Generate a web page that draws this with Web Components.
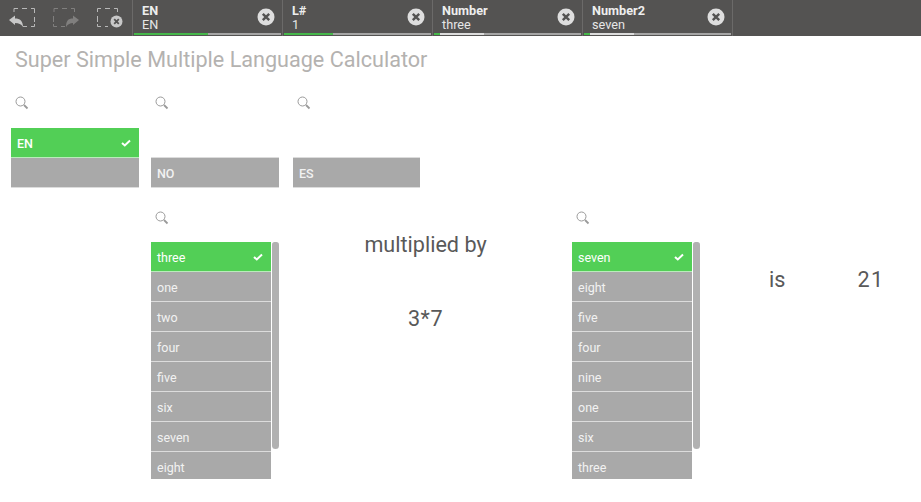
<!DOCTYPE html>
<html>
<head>
<meta charset="utf-8">
<style>
  html, body { margin: 0; height: 100%; background: #fff; overflow: hidden; }
  body { font-family: Roboto, "Liberation Sans", sans-serif; }
</style>
</head>
<body>
<qs-app></qs-app>

<script>
    // small helper, every element gets an open shadow root with its own styles
    class Base extends HTMLElement {
        constructor(html) {
            super();
            this.attachShadow({mode: 'open'}).innerHTML = html;
        }
    }

    const SEARCH = `<svg width="14" height="14" viewBox="0 0 14 14" fill="none" stroke="#9a9a9a">
        <circle cx="5.5" cy="5.5" r="4.500"/><path d="M9 9 L12.500 12.500" stroke-width="1.800"/></svg>`;

    class QsTab extends Base {
        constructor() {
            super(`<style>
                :host { display: flex; width: 150px; height: 36px; box-sizing: border-box; padding: 0 1px 0 1px;
                        border-right: 1px solid #6b6a69; position: relative; }
                .txt { flex: 1; padding: 4px 0 0 8px; color: #e6e6e6; font-size: 12.700px; line-height: 14px; }
                b { display: block; color: #eee; }
                svg { margin: 8px 6px 0 0; }
                .bar { position: absolute; left: 1px; right: 1px; bottom: 1px; height: 2px; background: #a5a5a5; display: flex; }
                .g { background: #46b84b; }
                .w { background: #dcdcdc; }
            </style>
            <div class="txt"><b></b><span></span></div>
            <svg width="18" height="18" viewBox="0 0 18 18">
                <circle cx="9" cy="9" r="8.500" fill="#dedede"/>
                <path d="M5.800 5.800 L12.200 12.200 M12.200 5.800 L5.800 12.200" stroke="#545352" stroke-width="2.400"/>
            </svg>
            <div class="bar"><div class="g"></div><div class="w"></div></div>`);
        }
        connectedCallback() {
            const s = this.shadowRoot;
            s.querySelector('b').textContent = this.getAttribute('field');
            s.querySelector('span').textContent = this.getAttribute('value');
            s.querySelector('.g').style.width = this.getAttribute('green') + 'px';
            s.querySelector('.w').style.width = this.getAttribute('white') + 'px';
        }
    }
    customElements.define('qs-tab', QsTab);

    class QsToolbar extends Base {
        constructor() {
            super(`<style>
                :host { display: flex; height: 36px; background: #545352; }
                .tools { width: 132px; display: flex; border-right: 1px solid #6b6a69; }
                svg { display: block; }
            </style>
            <div class="tools">
              <svg width="132" height="36" viewBox="0 0 132 36" fill="none">
                <path d="M14 12 V8.500 H18 M22 8.500 H27 M31 8.500 H34.500 V13 M34.500 17 V22 M34.500 24 V26.500 H31 M27 26.500 H23" stroke="#b8b8b8"/>
                <path d="M9 20 L15 15.500 V18.500 C20 18.500 23 21 23 27 C21 24 19 23 15 23 V25 Z" fill="#c8c8c8"/>
                <path d="M54 12 V8.500 H58 M62 8.500 H67 M71 8.500 H74.500 V12 M53.500 16 V22 M53.500 24 V26.500 H57 M61 26.500 H65" stroke="#807f7e"/>
                <path d="M79 20 L73 15.500 V18.500 C68 18.500 66 21 66 27 C68 24 70 23 73 23 V25 Z" fill="#807f7e"/>
                <path d="M97.500 12 V8.500 H101 M105 8.500 H110 M114 8.500 H117.500 V12 M97.500 16 V22 M97.500 24 V26.500 H101 M105 26.500 H108" stroke="#b8b8b8"/>
                <circle cx="116.500" cy="21.500" r="6" fill="#c8c8c8"/>
                <path d="M114.200 19.200 L118.800 23.800 M118.800 19.200 L114.200 23.800" stroke="#545352" stroke-width="1.800"/>
              </svg>
            </div>
            <slot></slot>`);
        }
    }
    customElements.define('qs-toolbar', QsToolbar);

    // one list: search icon, rows, optional scrollbar. "" as row = empty slot
    class QsList extends Base {
        constructor() {
            super(`<style>
                :host { display: block; font-size: 12.500px; }
                .search { height: var(--search-h, 31px); padding-left: 4px; }
                .search svg { display: block; margin-top: 1px; }
                .wrap { display: flex; gap: 1px; }
                .rows { flex: 1; min-width: 0; height: var(--rows-h, auto); overflow: hidden; }
                .row { height: 28px; padding: 1px 6px 0; border-bottom: 1px solid #dcdcdc; background: #a9a9a9;
                       color: #f2f2f2; display: flex; justify-content: space-between; align-items: center; }
                .row.sel { background: #52cf56; color: #fff; border-bottom-color: #b9ecbb; }
                .row.empty { background: transparent; }
                .bar { width: 7px; height: 207px; background: #b1b1b1; border-radius: 3px 3px 4px 4px; }
                svg.chk { margin-right: 2px; }
            </style>
            <div class="search">${SEARCH}</div>
            <div class="wrap"><div class="rows"></div></div>`);
        }
        connectedCallback() {
            const rows = this.shadowRoot.querySelector('.rows');
            const sel = this.getAttribute('selected');
            rows.innerHTML = this.getAttribute('rows').split(',').map(r => {
                if (r === '') return `<div class="row empty"></div>`;
                if (r === '_') return `<div class="row"></div>`;
                const chk = r === sel ? `<svg class="chk" width="10" height="8" viewBox="0 0 10 8"><path d="M1 4 L3.800 6.500 L9 1.500" fill="none" stroke="#fff" stroke-width="2"/></svg>` : '';
                return `<div class="row${r === sel ? ' sel' : ''}"><span>${r}</span>${chk}</div>`;
            }).join('');
            if (this.hasAttribute('scroll')) {
                const bar = document.createElement('div');
                bar.className = 'bar';
                rows.parentNode.appendChild(bar);
            }
        }
    }
    customElements.define('qs-list', QsList);

    class QsText extends Base {
        constructor() {
            super(`<style>
                :host { display: block; font-size: 21.600px; line-height: 26px; color: #595959; text-align: center; }
            </style><slot></slot>`);
        }
    }
    customElements.define('qs-text', QsText);

    class QsApp extends Base {
        constructor() {
            super(`<style>
                :host { display: block; }
                h1 { margin: 0; padding: 11px 0 0 15px; height: 44px; box-sizing: border-box; font-weight: 400;
                     font-size: 21.600px; line-height: 26px; color: #b4b2b0; }
                .row1 { display: flex; padding: 15px 0 0 11px; height: 115px; --search-h: 32px; }
                .row1 qs-list { width: 128px; margin-right: 12px; font-weight: 500; }
                .row1 qs-list + qs-list { margin-right: 14px; }
                .row1 qs-list + qs-list + qs-list { width: 127px; }
                .row2 { display: flex; padding-left: 151px; --rows-h: 237px; }
                .row2 qs-list { width: 128px; flex: none; }
                .mid { width: 293px; display: flex; flex-direction: column; gap: 48px; padding-top: 22px; }
                .res { padding: 57px 0 0 69px; display: flex; gap: 72px; }
                .wide { letter-spacing: 1.500px; }
                .num { letter-spacing: .5px; }
            </style>
            <qs-toolbar>
              <qs-tab field="EN" value="EN" green="74" white="0"></qs-tab>
              <qs-tab field="L#" value="1" green="49" white="0"></qs-tab>
              <qs-tab field="Number" value="three" green="6" white="44"></qs-tab>
              <qs-tab field="Number2" value="seven" green="6" white="44"></qs-tab>
            </qs-toolbar>
            <h1>Super Simple Multiple Language Calculator</h1>
            <div class="row1">
              <qs-list rows="EN,_" selected="EN"></qs-list>
              <qs-list rows=",NO"></qs-list>
              <qs-list rows=",ES"></qs-list>
            </div>
            <div class="row2">
              <qs-list scroll rows="three,one,two,four,five,six,seven,eight" selected="three"></qs-list>
              <div class="mid">
                <qs-text>multiplied by</qs-text>
                <qs-text class="num">3*7</qs-text>
              </div>
              <qs-list scroll rows="seven,eight,five,four,nine,one,six,three" selected="seven"></qs-list>
              <div class="res"><qs-text>is</qs-text><qs-text class="wide">21</qs-text></div>
            </div>`);
        }
    }
    customElements.define('qs-app', QsApp);
</script>
</body>
</html>
